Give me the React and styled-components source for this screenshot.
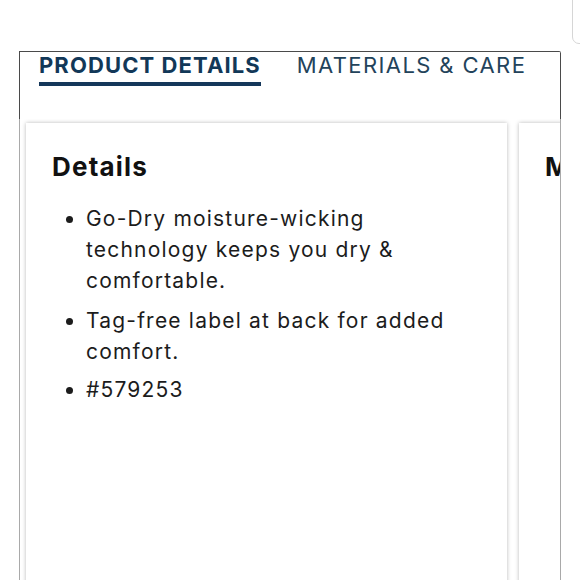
import React from "react";
import styled, { createGlobalStyle } from "styled-components";

const Global = createGlobalStyle`
  html, body { margin: 0; padding: 0; background: #ffffff; }
  body { font-family: Inter, "Open Sans", sans-serif; overflow: hidden; }
  * { box-sizing: border-box; }
`;

const Page = styled.div`
  position: relative;
  width: 580px;
  height: 580px;
  overflow: hidden;
  padding: 51px 0 0 19px;
`;

const CornerWidget = styled.div`
  position: absolute;
  left: 572px;
  top: -20px;
  width: 60px;
  height: 64px;
  border: 1px solid #d6d6d6;
  border-radius: 7px;
`;

const Frame = styled.div`
  width: 542px;
  height: 560px;
  border-top: 1px solid #4a4a4a;
  border-top-right-radius: 2px;
  overflow: hidden;
  display: flex;
  flex-direction: column;
`;

const TabBar = styled.div`
  display: flex;
  gap: 36px;
  height: 67px;
  padding: 0 0 0 19px;
  border-left: 1px solid #4a4a4a;
  border-right: 1px solid #4a4a4a;
`;

const Tab = styled.div`
  font-family: Inter, sans-serif;
  font-size: 22px;
  line-height: 26px;
  letter-spacing: ${p => (p.$active ? "1.1px" : "1.4px")};
  color: ${p => (p.$active ? "#123858" : "#23435b")};
  font-weight: ${p => (p.$active ? 700 : 400)};
  height: 34px;
  border-bottom: ${p => (p.$active ? "4px solid #15375a" : "4px solid transparent")};
  white-space: nowrap;
`;

const Body = styled.div`
  flex: 1;
  display: flex;
  gap: 12px;
  padding: 4px 0 0 6px;
  border-left: 1px solid #a9a9a9;
  border-right: 1px solid #a9a9a9;
  overflow: hidden;
`;

const Card = styled.div`
  flex: 0 0 ${p => p.$w}px;
  background: #fff;
  box-shadow: 0 0 4px rgba(0, 0, 0, 0.28);
  padding: 28px 0 0 26px;
  overflow: hidden;
`;

const Heading = styled.h2`
  margin: 0 0 20px;
  font-family: Inter, sans-serif;
  font-size: 26px;
  line-height: 32px;
  font-weight: 700;
  letter-spacing: 1.2px;
  color: #111;
  white-space: nowrap;
`;

const List = styled.ul`
  margin: 0;
  padding: 0 0 0 34px;
  list-style: disc;
`;

const Item = styled.li`
  font-family: Inter, sans-serif;
  font-size: 21px;
  line-height: 31px;
  letter-spacing: 1.2px;
  color: #1c1c1c;
  margin-bottom: ${p => (p.$tight ? 7 : 9)}px;
  padding-right: 30px;
`;

export default function App() {
  return (
    <>
      <Global />
      <Page>
        <CornerWidget />
        <Frame>
          <TabBar>
            <Tab $active>PRODUCT DETAILS</Tab>
            <Tab>MATERIALS &amp; CARE</Tab>
          </TabBar>
          <Body>
            <Card $w={481}>
              <Heading>Details</Heading>
              <List>
                <Item>Go-Dry moisture-wicking technology keeps you dry &amp; comfortable.</Item>
                <Item $tight>Tag-free label at back for added comfort.</Item>
                <Item>#579253</Item>
              </List>
            </Card>
            <Card $w={200}>
              <Heading>M</Heading>
            </Card>
          </Body>
        </Frame>
      </Page>
    </>
  );
}
